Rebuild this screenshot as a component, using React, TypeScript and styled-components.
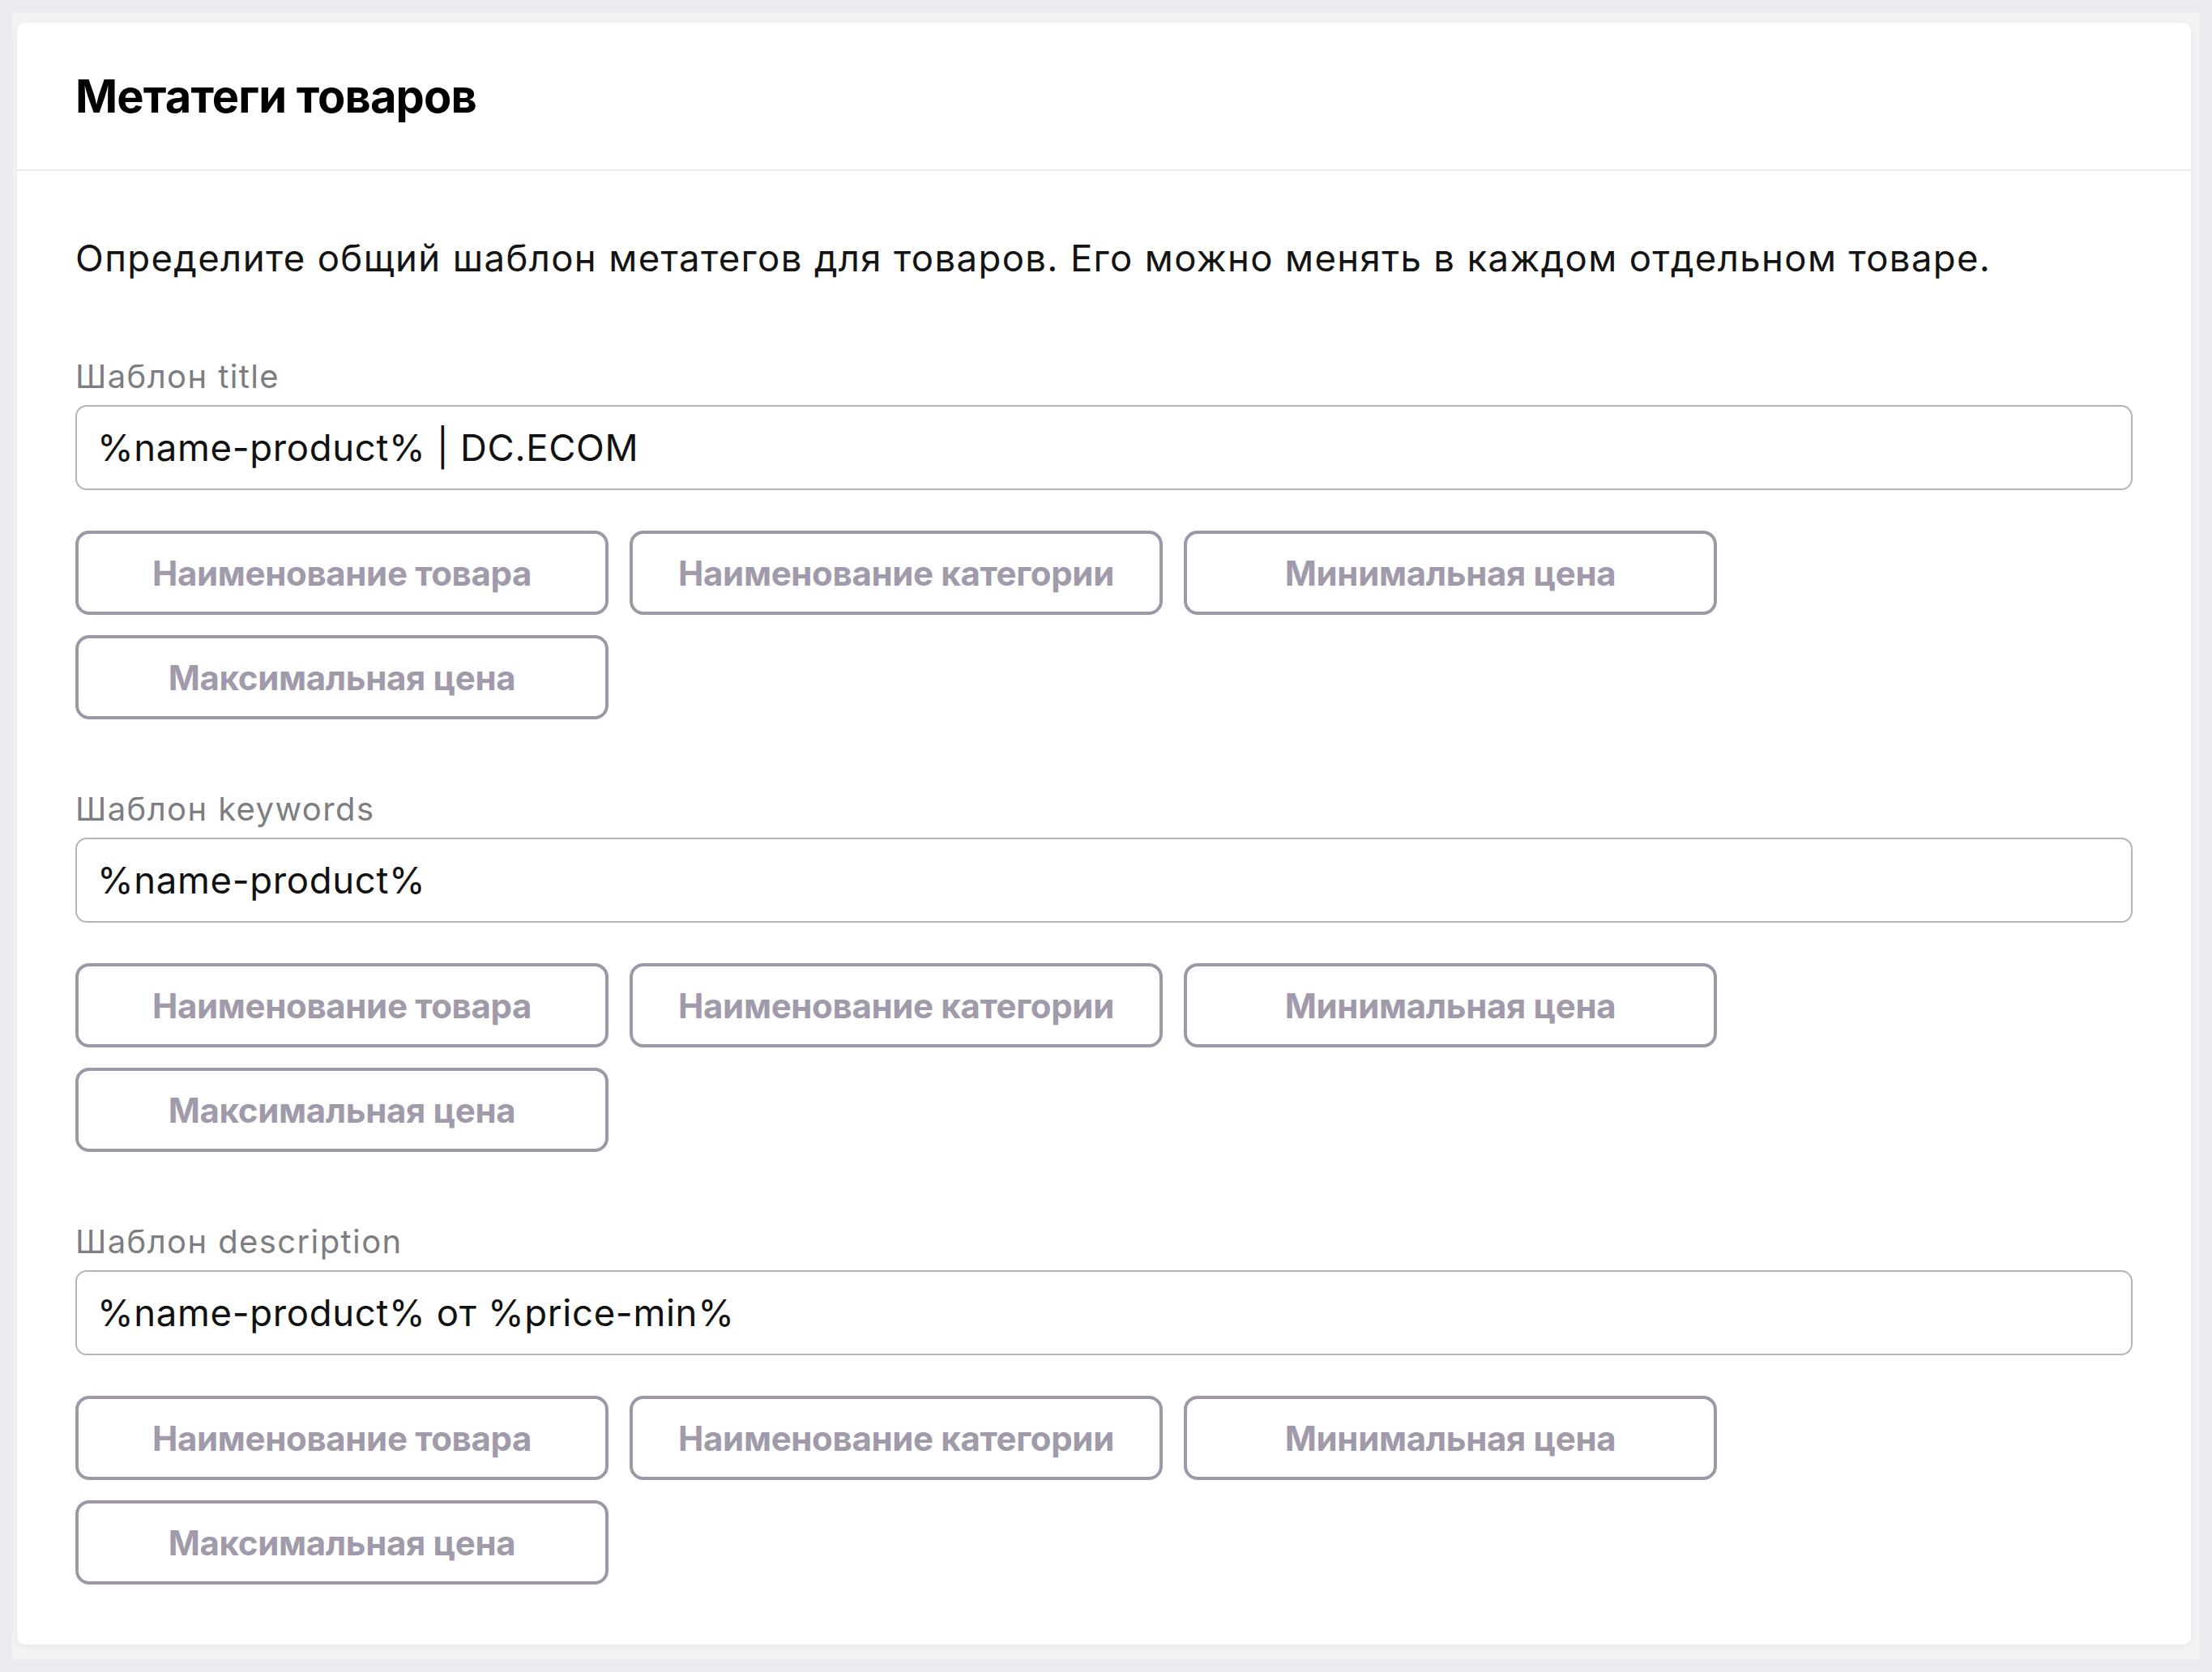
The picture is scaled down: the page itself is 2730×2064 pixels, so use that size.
import React from "react";
import styled, { createGlobalStyle } from "styled-components";

const GlobalStyle = createGlobalStyle`
  html, body {
    margin: 0;
    padding: 0;
    background: #ebecf0;
  }
  body {
    font-family: Inter, "Noto Sans", sans-serif;
  }
`;

const Frame = styled.div`
  margin: 15px;
  width: 2700px;
  box-sizing: border-box;
  padding: 13px 11px 19px 6px;
  background: #f3f3f6;
`;

const Card = styled.section`
  background: #ffffff;
  border-radius: 10px;
  box-shadow: 0 2px 10px rgba(30, 30, 60, 0.05);
  overflow: hidden;
`;

const Header = styled.header`
  height: 181px;
  display: flex;
  align-items: center;
  padding: 0 72px;
  border-bottom: 2px solid #ebebf1;
`;

const Title = styled.h1`
  margin: 0;
  font-family: Inter, sans-serif;
  font-weight: 700;
  font-size: 56px;
  line-height: 68px;
  color: #000000;
  letter-spacing: -0.85px;
`;

const Body = styled.div`
  padding: 78px 72px 74px;
  display: flex;
  flex-direction: column;
`;

const Description = styled.p`
  margin: 0 0 92px;
  font-family: Inter, sans-serif;
  font-weight: 400;
  font-size: 45.5px;
  line-height: 60px;
  letter-spacing: 1.35px;
  color: #141414;
`;

const Sections = styled.div`
  display: flex;
  flex-direction: column;
  gap: 87px;
`;

const Field = styled.div`
  display: flex;
  flex-direction: column;
`;

const Label = styled.label`
  font-family: Inter, sans-serif;
  font-size: 40px;
  line-height: 48px;
  letter-spacing: 1.4px;
  color: #7c7e81;
  margin-bottom: 11px;
`;

const TextInput = styled.input`
  box-sizing: border-box;
  height: 105px;
  width: 100%;
  border: 2px solid #b4b4b9;
  border-radius: 14px;
  padding: 0 25px;
  font-family: Inter, sans-serif;
  font-size: 45.5px;
  letter-spacing: 0.65px;
  color: #111111;
  background: #ffffff;
  outline: none;
`;

const Chips = styled.div`
  margin-top: 50px;
  display: flex;
  flex-wrap: wrap;
  column-gap: 26px;
  row-gap: 25px;
`;

const Chip = styled.button`
  box-sizing: border-box;
  width: 658px;
  height: 104px;
  border: 4px solid #9d97a6;
  border-radius: 17px;
  background: #ffffff;
  font-family: Inter, sans-serif;
  font-weight: 700;
  font-size: 42px;
  letter-spacing: -0.35px;
  color: #a09aaa;
  cursor: pointer;
  padding: 0;
`;

const chips = [
  "Наименование товара",
  "Наименование категории",
  "Минимальная цена",
  "Максимальная цена",
];

const fields = [
  { label: "Шаблон title", value: "%name-product% | DC.ECOM" },
  { label: "Шаблон keywords", value: "%name-product%" },
  { label: "Шаблон description", value: "%name-product% от %price-min%" },
];

export default function App() {
  return (
    <>
      <GlobalStyle />
      <Frame>
        <Card>
          <Header>
            <Title>Метатеги товаров</Title>
          </Header>
          <Body>
            <Description>
              Определите общий шаблон метатегов для товаров. Его можно менять в
              каждом отдельном товаре.
            </Description>
            <Sections>
              {fields.map((f) => (
                <Field key={f.label}>
                  <Label>{f.label}</Label>
                  <TextInput readOnly defaultValue={f.value} />
                  <Chips>
                    {chips.map((c) => (
                      <Chip key={c} type="button">
                        {c}
                      </Chip>
                    ))}
                  </Chips>
                </Field>
              ))}
            </Sections>
          </Body>
        </Card>
      </Frame>
    </>
  );
}
